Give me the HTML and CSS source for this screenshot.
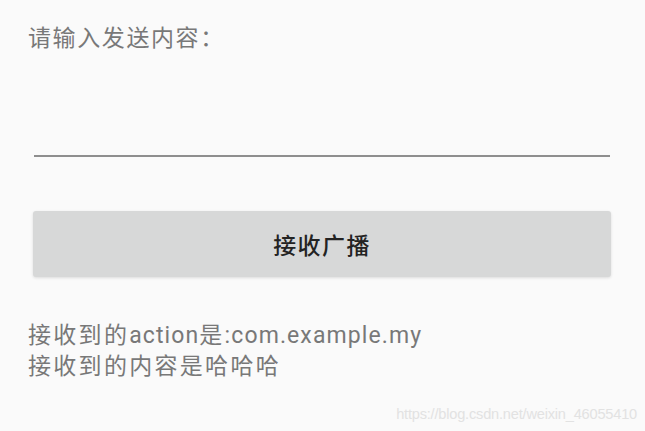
FILE: index.html
```html
<!DOCTYPE html>
<html lang="zh-CN">
<head>
<meta charset="utf-8">
<title>接收广播</title>
<link rel="stylesheet" href="styles.css">
</head>
<body>
<div class="page">
  <div class="label">请输入发送内容：</div>
  <div class="field"></div>
  <div class="button">接收广播</div>
  <div class="result">
    <div class="line">接收到的<span class="latin">action</span>是<span class="latin">:com.example.my</span></div>
    <div class="line">接收到的内容是哈哈哈</div>
  </div>
  <div class="watermark">https://blog.csdn.net/weixin_46055410</div>
</div>
</body>
</html>
```

FILE: styles.css
```css
html, body {
  margin: 0;
  padding: 0;
  background: #fafafa;
}
.page {
  position: relative;
  width: 645px;
  height: 431px;
  overflow: hidden;
  padding: 24px 28px 0 28px;
  box-sizing: border-box;
  display: flex;
  flex-direction: column;
  font-family: "Roboto", "Noto Sans CJK SC", sans-serif;
}
.label {
  font-size: 23px;
  line-height: 30px;
  letter-spacing: 1.6px;
  color: #787878;
}
.field {
  margin: 0 7px 0 6px;
  height: 103px;
  box-sizing: border-box;
  border-bottom: 2px solid #8e8e8e;
}
.button {
  margin: 54px 6px 0 5px;
  height: 66px;
  background: #d7d8d8;
  border-radius: 3px;
  box-shadow: 0 1px 3px rgba(0, 0, 0, 0.12);
  display: flex;
  align-items: center;
  justify-content: center;
  font-size: 23px;
  font-weight: 500;
  letter-spacing: 1.4px;
  color: #232323;
}
.result {
  margin-top: 43px;
  display: flex;
  flex-direction: column;
}
.line {
  font-size: 23px;
  line-height: 31px;
  letter-spacing: 2.3px;
  color: #787878;
  white-space: nowrap;
}
.latin {
  letter-spacing: 1.1px;
}
.watermark {
  position: absolute;
  right: 8px;
  bottom: 8px;
  font-family: "Liberation Sans", sans-serif;
  font-size: 14.6px;
  line-height: 18px;
  letter-spacing: -0.2px;
  color: #e2e2e2;
}
```
